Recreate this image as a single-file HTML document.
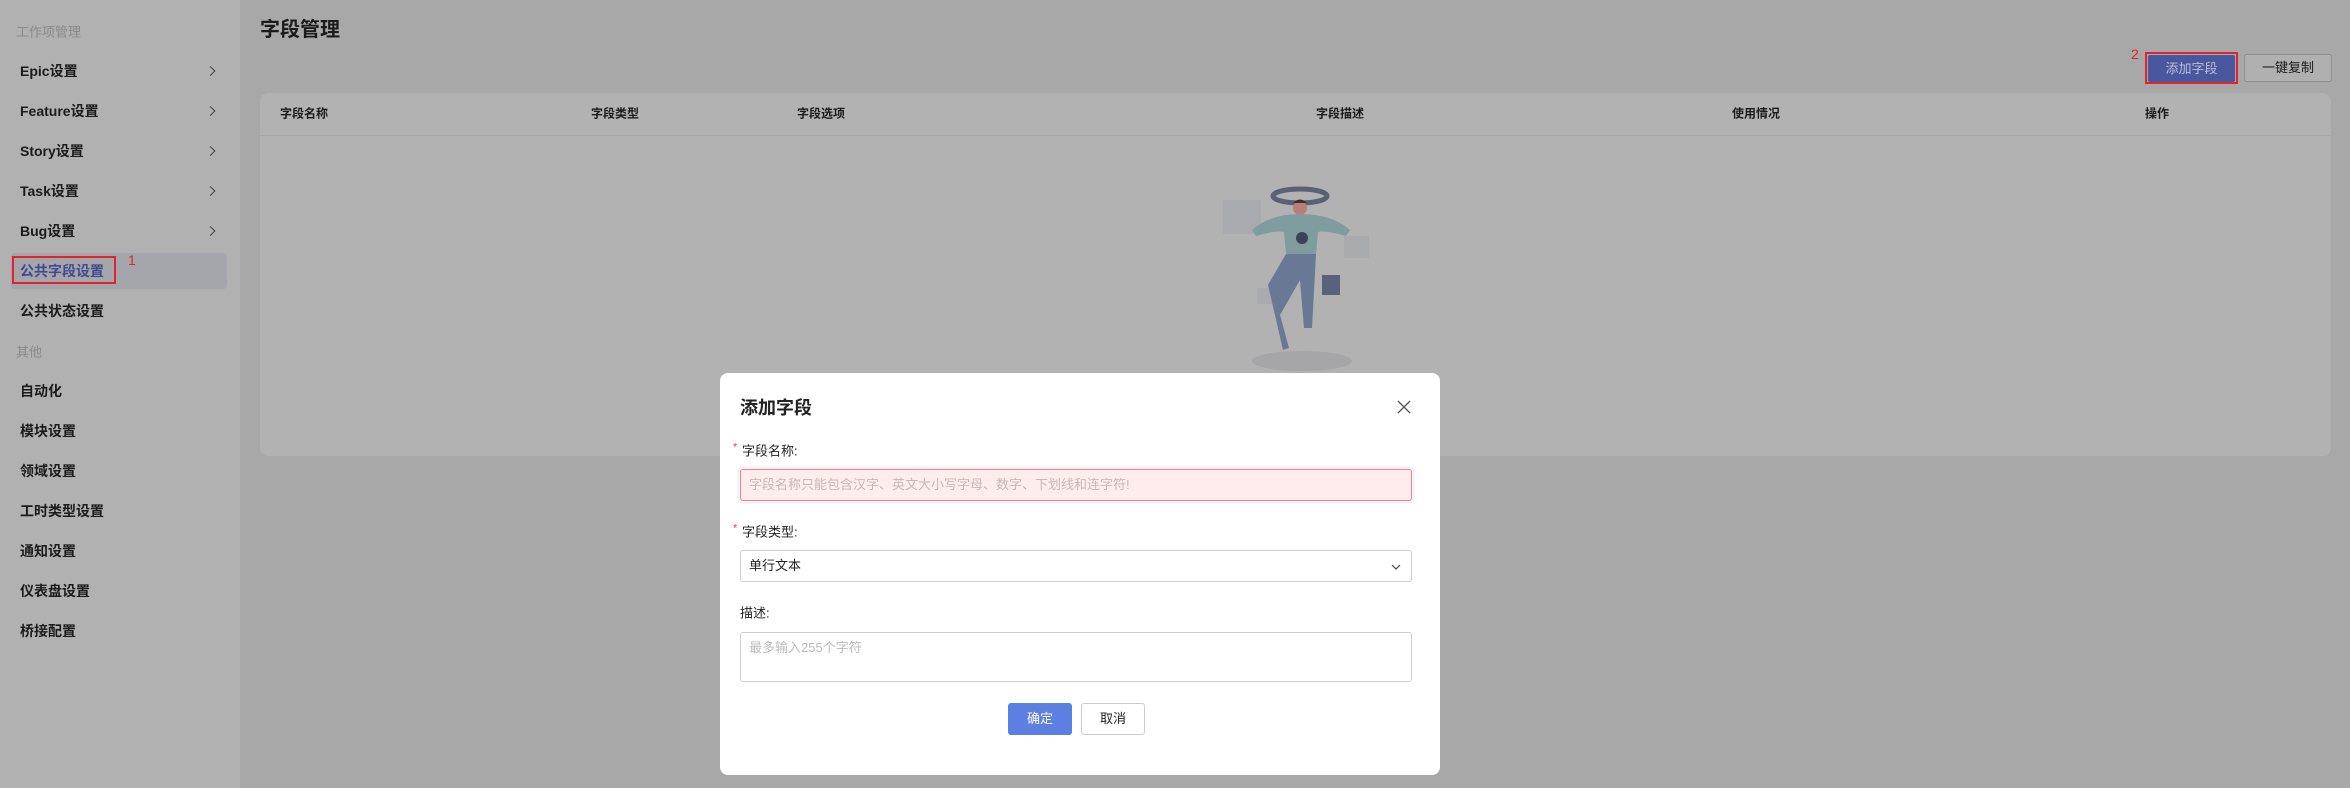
<!DOCTYPE html>
<html><head><meta charset="utf-8"><style>
*{margin:0;padding:0;box-sizing:border-box}
body{width:2350px;height:788px;overflow:hidden;background:#a8a8a8;font-family:"Liberation Sans","Noto Sans CJK SC",sans-serif;position:relative;color:#1b1b1b}
.abs{position:absolute;white-space:nowrap}
.side{position:absolute;left:0;top:0;width:240px;height:788px;background:#b1b1b1}
.grp{position:absolute;left:16px;font-size:13px;color:#8a8a8a;transform:translateY(-50%)}
.it{position:absolute;left:20px;font-size:14px;font-weight:bold;color:#1b1b1b;transform:translateY(-50%)}
.chev{position:absolute;left:207px;width:7px;height:7px;border-right:1.3px solid #444;border-top:1.3px solid #444;transform:translateY(-50%) rotate(45deg)}
.card{position:absolute;left:260px;top:93px;width:2071px;height:363px;background:#b2b2b2;border-radius:8px}
.th{position:absolute;top:113px;font-size:12px;font-weight:bold;transform:translateY(-50%)}
.modal{position:absolute;left:720px;top:373px;width:720px;height:402px;background:#fff;border-radius:8px}
.lbl{position:absolute;left:22px;font-size:13px;color:#222;transform:translateY(-50%)}
.star{color:#f04040;font-size:11px;position:absolute;left:-9px;top:1px}
.inp{position:absolute;left:20px;width:672px;border:1px solid #cfcfcf;border-radius:3px;font-size:13px}
</style></head><body>
<div class="side">
<div class="grp" style="top:31px">工作项管理</div>
<div class="it" style="top:71px">Epic设置</div><div class="chev" style="top:71px"></div>
<div class="it" style="top:111px">Feature设置</div><div class="chev" style="top:111px"></div>
<div class="it" style="top:151px">Story设置</div><div class="chev" style="top:151px"></div>
<div class="it" style="top:191px">Task设置</div><div class="chev" style="top:191px"></div>
<div class="it" style="top:231px">Bug设置</div><div class="chev" style="top:231px"></div>
<div class="abs" style="left:11px;top:253px;width:216px;height:36px;background:#a5a6ab;border-radius:4px"></div>
<div class="abs" style="left:12px;top:256px;width:104px;height:28px;border:2px solid #e0242b"></div>
<div class="it" style="top:271px;color:#41498f">公共字段设置</div>
<div class="abs" style="left:128px;top:252px;font-size:14px;color:#e0242b">1</div>
<div class="it" style="top:311px">公共状态设置</div>
<div class="grp" style="top:351px">其他</div>
<div class="it" style="top:391px">自动化</div>
<div class="it" style="top:431px">模块设置</div>
<div class="it" style="top:471px">领域设置</div>
<div class="it" style="top:511px">工时类型设置</div>
<div class="it" style="top:551px">通知设置</div>
<div class="it" style="top:591px">仪表盘设置</div>
<div class="it" style="top:631px">桥接配置</div>
</div>
<div class="abs" style="left:260px;top:13px;font-size:20px;font-weight:bold">字段管理</div>
<div class="abs" style="left:2131px;top:46px;font-size:14px;color:#e0242b">2</div>
<div class="abs" style="left:2145px;top:52px;width:93px;height:32px;border:2px solid #e0242b"></div>
<div class="abs" style="left:2148px;top:55px;width:87px;height:27px;background:#48579e;color:#b9bfd8;font-size:13px;text-align:center;line-height:27px;border-radius:2px">添加字段</div>
<div class="abs" style="left:2244px;top:54px;width:88px;height:28px;border:1px solid #8f8f8f;border-radius:3px;font-size:13px;text-align:center;line-height:26px;background:#b0b0b0">一键复制</div>
<div class="card"><div style="position:absolute;left:0;right:0;top:42px;border-top:1px solid #a6a6a6"></div></div>
<div class="th" style="left:280px">字段名称</div>
<div class="th" style="left:591px">字段类型</div>
<div class="th" style="left:797px">字段选项</div>
<div class="th" style="left:1316px">字段描述</div>
<div class="th" style="left:1732px">使用情况</div>
<div class="th" style="left:2145px">操作</div>
<svg class="abs" style="left:1200px;top:170px" width="220" height="210" viewBox="0 0 220 210">
<ellipse cx="102" cy="191" rx="50" ry="10" fill="#a6a6a8"/>
<rect x="23" y="30" width="38" height="34" fill="#a9aaad"/>
<rect x="144" y="66" width="25" height="22" fill="#a9aaad"/>
<rect x="57" y="118" width="17" height="16" fill="#a9aaad"/>
<ellipse cx="100" cy="26" rx="27" ry="7" fill="none" stroke="#5a6177" stroke-width="5"/>
<circle cx="100" cy="38" r="7" fill="#b87e7a"/>
<path d="M93 33 Q100 26 107 33Z" fill="#4a2a24"/>
<path d="M52 60 Q70 44 100 44 Q132 44 150 60 L146 66 Q125 60 118 62 L116 84 L86 84 L84 62 Q76 60 56 66Z" fill="#7f9c9e"/>
<circle cx="102" cy="68" r="6" fill="#3b4257"/>
<path d="M86 84 L116 84 L112 158 L104 158 L100 110 L80 145 L89 178 L83 180 L68 115Z" fill="#687895"/>
<rect x="122" y="105" width="18" height="20" fill="#59627a"/>
</svg>
<div class="modal">
<div class="abs" style="left:20px;top:21px;font-size:18px;font-weight:bold;color:#222">添加字段</div>
<svg class="abs" style="left:677px;top:27px" width="14" height="14"><path d="M1 1L13 13M13 1L1 13" stroke="#555" stroke-width="1.3"/></svg>
<div class="lbl" style="top:77px"><span class="star">*</span>字段名称:</div>
<div class="abs" style="left:17px;top:93px;width:678px;height:38px;background:#f2f4fd;border-radius:5px"></div>
<div class="inp" style="top:96px;height:32px;background:#ffecec;border-color:#f08484;color:#c8b8b8;padding-left:8px;line-height:30px">字段名称只能包含汉字、英文大小写字母、数字、下划线和连字符!</div>
<div class="lbl" style="top:158px"><span class="star">*</span>字段类型:</div>
<div class="inp" style="top:177px;height:32px;padding-left:8px;line-height:30px;font-size:13px;color:#222">单行文本</div>
<svg class="abs" style="left:671px;top:191px" width="10" height="6"><path d="M1 1L5 5L9 1" fill="none" stroke="#444" stroke-width="1.2"/></svg>
<div class="lbl" style="top:239px;left:20px">描述:</div>
<div class="inp" style="top:259px;height:50px;padding:4px 8px;color:#bbb">最多输入255个字符</div>
<div class="abs" style="left:288px;top:330px;width:64px;height:32px;background:#5e7fe2;color:#fff;border-radius:3px;font-size:13px;text-align:center;line-height:32px">确定</div>
<div class="abs" style="left:361px;top:330px;width:64px;height:32px;border:1px solid #ccc;border-radius:3px;font-size:13px;text-align:center;line-height:30px;color:#222">取消</div>
</div>
</body></html>
